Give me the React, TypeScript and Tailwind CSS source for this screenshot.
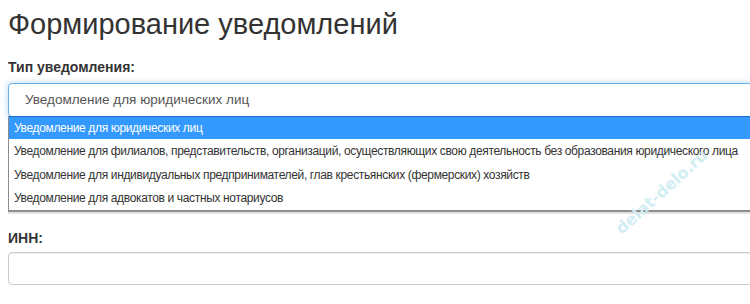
import React from "react";

const options = [
  "Уведомление для юридических лиц",
  "Уведомление для филиалов, представительств, организаций, осуществляющих свою деятельность без образования юридического лица",
  "Уведомление для индивидуальных предпринимателей, глав крестьянских (фермерских) хозяйств",
  "Уведомление для адвокатов и частных нотариусов",
];

export default function App() {
  return (
    <div className="relative w-[750px] h-[304px] overflow-hidden bg-white pl-2 font-['Liberation_Sans',Arial,sans-serif] text-[#333]">
      <h2 className="mt-[9px] text-[29px] leading-[1.1] font-normal whitespace-nowrap">Формирование уведомлений</h2>
      <div className="mt-[16px] w-[800px]">
        <label className="block text-[14px] leading-[20px] font-bold mb-[6px]">Тип уведомления:</label>
        <div className="relative">
          <div className="h-[34px] rounded-[4px] border border-[#66afe9] shadow-[0_0_6px_rgba(102,175,233,0.5)] bg-white flex items-center pl-4 text-[13.5px] text-[#555]">
            Уведомление для юридических лиц
          </div>
          <div className="absolute left-0 top-[33px] w-[800px] bg-white border-l border-[#8c8c8c] border-b-2 border-b-[#8c8c8c] shadow-[0_2px_0_#e2e2e2] text-[12px] tracking-[-0.35px]">
            {options.map((o, i) => (
              <div
                key={i}
                className={
                  i === 0
                    ? "h-[23.5px] flex items-center pl-[5px] bg-[#3399ff] text-white border-t border-[#1e6fd0] whitespace-nowrap"
                    : "h-[23.5px] flex items-center pl-[5px] text-[#333] whitespace-nowrap"
                }
              >
                {o}
              </div>
            ))}
          </div>
        </div>
        <label className="block mt-[111px] text-[14px] leading-[20px] font-bold mb-[4px]">ИНН:</label>
        <div className="h-[33px] rounded-[4px] border border-[#ccc] shadow-[inset_0_1px_1px_rgba(0,0,0,0.075)] bg-white" />
      </div>
      <div className="absolute left-[662px] top-[192px] -translate-x-1/2 -translate-y-1/2 -rotate-[42deg] text-[16px] font-bold text-[#d3eef3] font-['DejaVu_Sans',sans-serif] whitespace-nowrap pointer-events-none">
        delat-delo.ru
      </div>
    </div>
  );
}
